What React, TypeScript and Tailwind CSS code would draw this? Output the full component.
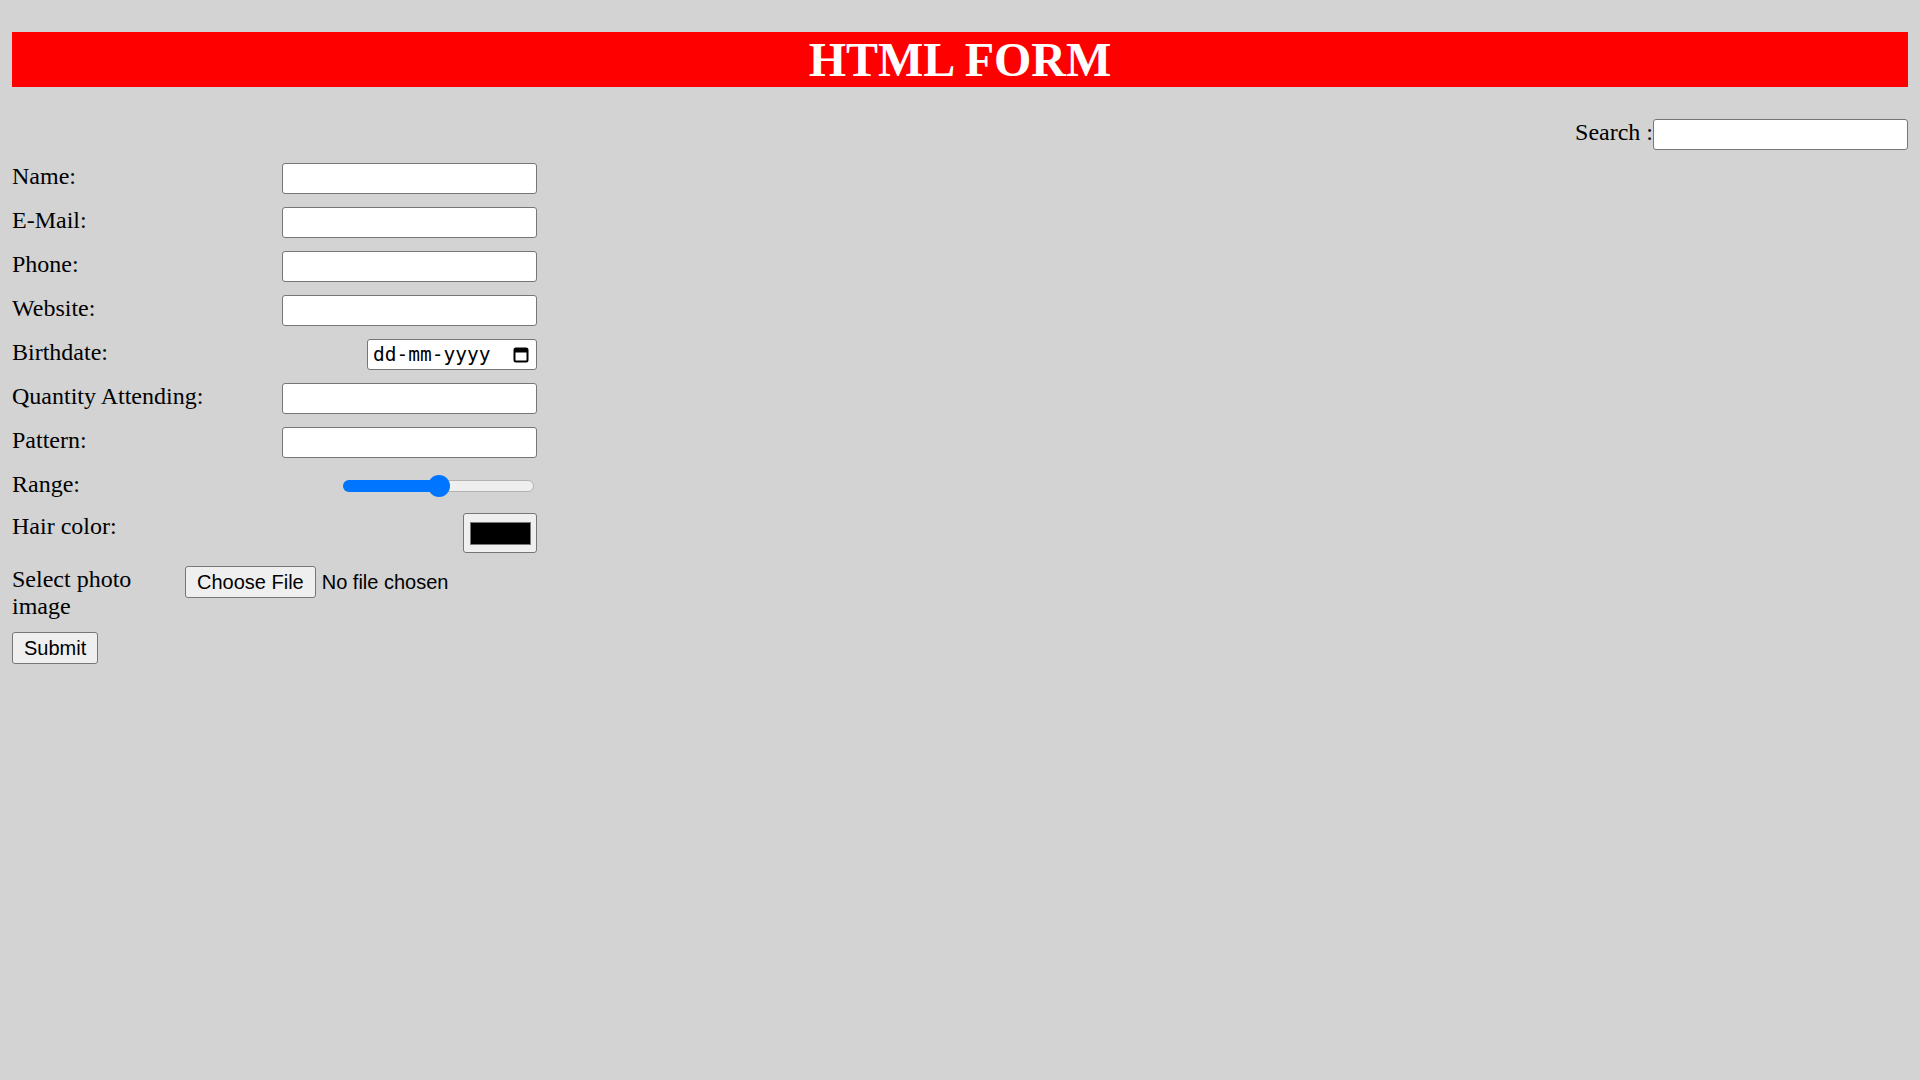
import { useState } from "react";

const textFields = ["Name:", "E-Mail:", "Phone:", "Website:"];

const inputClass =
  "h-[31px] w-[255px] shrink-0 rounded-[3px] border border-[#767676] bg-white px-[3px] font-['Liberation_Sans',Arial,sans-serif] text-[20px] text-black outline-none";

const buttonClass =
  "h-[32px] rounded-[3px] border border-[#767676] bg-[#efefef] px-[11px] font-['Liberation_Sans',Arial,sans-serif] text-[20px] leading-none text-black";

function FieldLabel({ children }: { children: React.ReactNode }) {
  return <label className="text-[24px] leading-[27.6px]">{children}</label>;
}

function CalendarIcon() {
  return (
    <svg width="16" height="16" viewBox="0 0 16 16" className="shrink-0">
      <rect x="1.5" y="1.5" width="13" height="13" rx="1.5" fill="none" stroke="#000" strokeWidth="2" />
      <rect x="1.5" y="1.5" width="13" height="4" fill="#000" />
    </svg>
  );
}

export default function App() {
  const [range] = useState(50);

  return (
    <div className="min-h-screen bg-[#d3d3d3] px-[12px] pt-[32px] font-['Liberation_Serif','Times_New_Roman',serif] text-black">
      <h1 className="h-[55px] bg-[#ff0000] text-center text-[48px] font-bold leading-[55px] text-white">HTML FORM</h1>

      <div className="mt-[32px] flex items-start justify-end">
        <span className="text-[24px] leading-[27.6px]">Search :</span>
        <input type="text" className={inputClass} />
      </div>

      <form className="mt-[13px] flex w-[525px] flex-col gap-[13px]" onSubmit={(e) => e.preventDefault()}>
        {textFields.map((field) => (
          <div key={field} className="flex items-start justify-between">
            <FieldLabel>{field}</FieldLabel>
            <input type="text" className={inputClass} />
          </div>
        ))}

        <div className="flex items-start justify-between">
          <FieldLabel>Birthdate:</FieldLabel>
          <div className="flex h-[31px] w-[170px] items-center justify-between rounded-[3px] border border-[#767676] bg-white pl-[5px] pr-[7px]">
            <span className="font-['DejaVu_Sans_Mono',monospace] text-[19.5px] leading-none">dd-mm-yyyy</span>
            <CalendarIcon />
          </div>
        </div>

        <div className="flex items-start justify-between">
          <FieldLabel>Quantity Attending:</FieldLabel>
          <input type="text" className={inputClass} />
        </div>

        <div className="flex items-start justify-between">
          <FieldLabel>Pattern:</FieldLabel>
          <input type="text" className={inputClass} />
        </div>

        <div className="flex h-[29px] items-start justify-between">
          <FieldLabel>Range:</FieldLabel>
          <div className="relative mr-[3px] h-[29px] w-[191px]">
            <div className="absolute left-0 right-0 top-[9px] h-[12px] rounded-full border border-[#b2b2b2] bg-[#efefef]" />
            <div
              className="absolute left-0 top-[9px] h-[12px] rounded-full bg-[#0075ff]"
              style={{ width: `${range}%` }}
            />
            <div
              className="absolute top-[4px] h-[22px] w-[22px] -translate-x-1/2 rounded-full bg-[#0075ff]"
              style={{ left: `${range}%` }}
            />
          </div>
        </div>

        <div className="flex items-start justify-between">
          <FieldLabel>Hair color:</FieldLabel>
          <div className="flex h-[40px] w-[74px] items-center justify-center rounded-[3px] border border-[#767676] bg-[#efefef]">
            <div className="h-[23px] w-[61px] border border-[#777777] bg-black" />
          </div>
        </div>

        <div className="flex items-start justify-between gap-[12px]">
          <label className="min-w-0 flex-1 text-[24px] leading-[26.5px]">Select photo image</label>
          <div className="flex w-[352px] shrink-0 items-center">
            <button type="button" className={buttonClass}>
              Choose File
            </button>
            <span className="ml-[6px] font-['Liberation_Sans',Arial,sans-serif] text-[20px] leading-none">No file chosen</span>
          </div>
        </div>

        <div>
          <button type="submit" className={buttonClass}>
            Submit
          </button>
        </div>
      </form>
    </div>
  );
}
